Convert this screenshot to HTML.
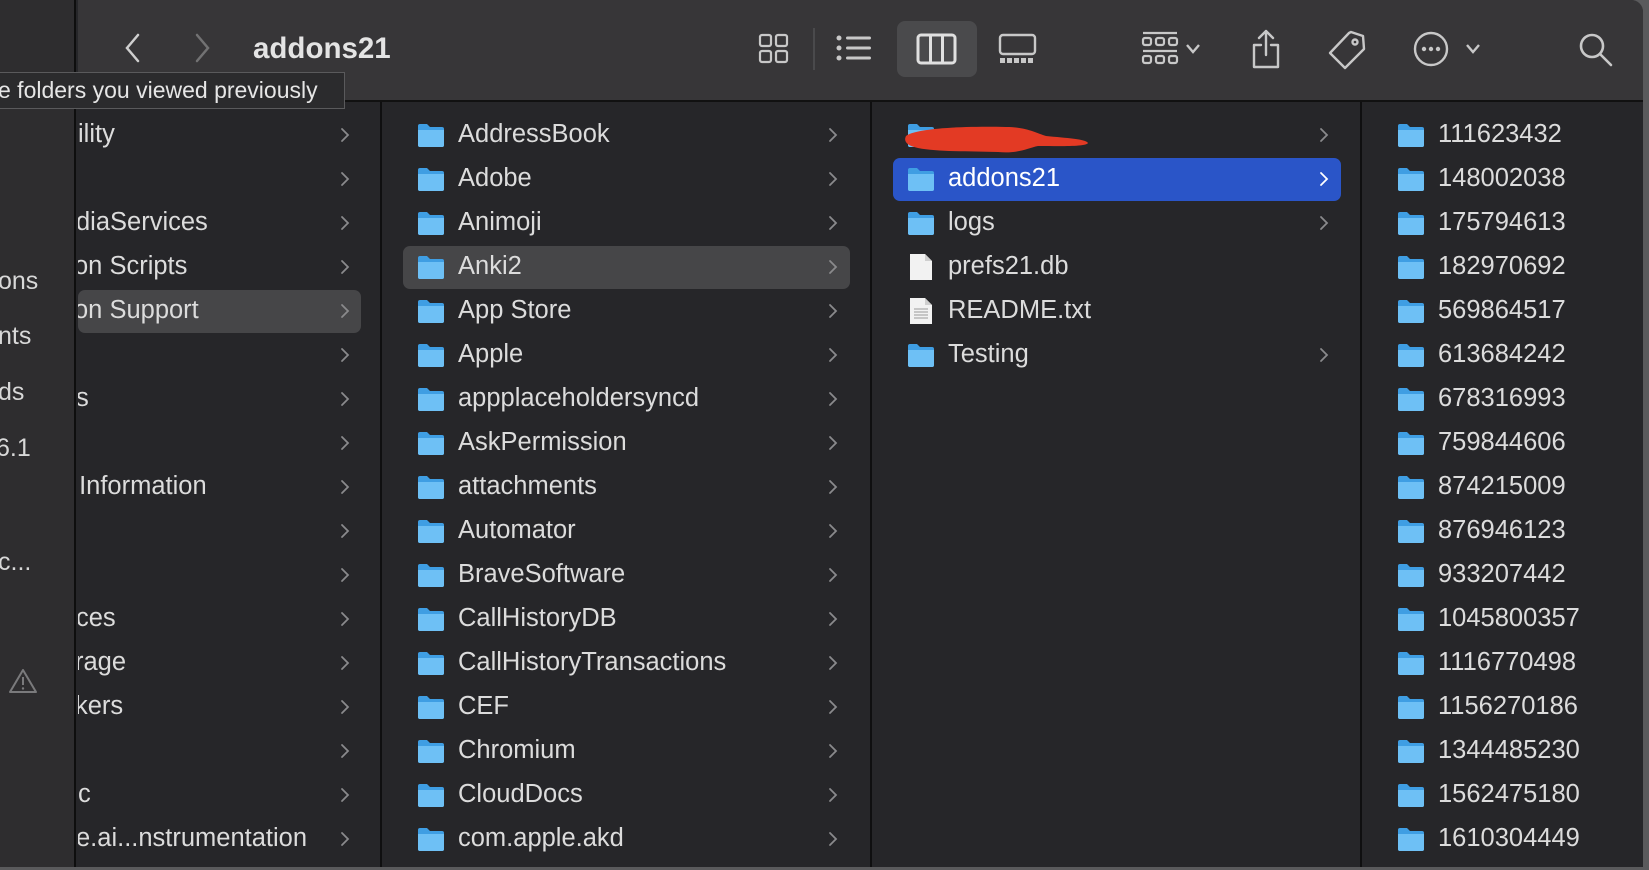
<!DOCTYPE html>
<html><head><meta charset="utf-8"><style>
*{margin:0;padding:0;box-sizing:border-box}
html,body{width:1649px;height:870px;overflow:hidden}
body{background:#5a5a5c;font-family:"Liberation Sans",Helvetica,Arial,sans-serif;position:relative}
.win{position:absolute;left:0;top:0;width:1643px;height:867px;background:#262629;border-top-right-radius:12px;overflow:hidden}
.side{position:absolute;left:0;top:0;width:76px;height:867px;background:#2e2d2f;border-right:2px solid #0e0e0e}
.tb{position:absolute;left:78px;top:0;right:0;height:102px;background:#373638;border-bottom:2px solid #111}
.col{position:absolute;top:102px;height:765px;border-right:2px solid #0f0f10;overflow:hidden}
.row{position:absolute;height:43px;line-height:43px;font-size:25.5px;color:#dcdcdc;white-space:nowrap}
.hl{position:absolute;background:#464648;border-radius:7px}
.sel{position:absolute;background:#2a55c8;border-radius:7px}
.chev{position:absolute;width:12px;height:16px}
.fold{position:absolute;width:28px;height:24px}
.st{position:absolute;font-size:25px;color:#d8d8d8}
svg{display:block}
</style></head><body>
<div class="win">
<div class="side">
 <div class="st" style="left:-2px;top:267px">ons</div>
 <div class="st" style="left:-2px;top:322px">nts</div>
 <div class="st" style="left:-2px;top:378px">ds</div>
 <div class="st" style="left:-4px;top:434px">6.1</div>
 <div class="st" style="left:-2px;top:548px">c...</div>
 <svg style="position:absolute;left:8px;top:668px" width="30" height="26" viewBox="0 0 30 26"><path d="M15 2 L28 24 H2 Z" fill="none" stroke="#7a7a7c" stroke-width="2" stroke-linejoin="round"/><path d="M15 9v8" stroke="#7a7a7c" stroke-width="2"/><circle cx="15" cy="20.5" r="1.2" fill="#7a7a7c"/></svg>
</div>
<div class="tb">
 <svg style="position:absolute;left:45px;top:32px" width="20" height="32"><path d="M15 3 L4 16 L15 29" fill="none" stroke="#cfcfcf" stroke-width="2.5" stroke-linecap="round"/></svg>
 <svg style="position:absolute;left:114px;top:32px" width="20" height="32"><path d="M5 3 L16 16 L5 29" fill="none" stroke="#727273" stroke-width="2.5" stroke-linecap="round"/></svg>
 <div style="position:absolute;left:175px;top:32px;font-size:29.5px;font-weight:bold;color:#e4e4e4">addons21</div>
 <svg style="position:absolute;left:680px;top:33px" width="32" height="32"><g fill="none" stroke="#c8c8c8" stroke-width="2.2"><rect x="2" y="2" width="11" height="11" rx="2"/><rect x="18" y="2" width="11" height="11" rx="2"/><rect x="2" y="18" width="11" height="11" rx="2"/><rect x="18" y="18" width="11" height="11" rx="2"/></g></svg>
 <div style="position:absolute;left:735px;top:28px;width:2px;height:42px;background:#4a4a4c"></div>
 <svg style="position:absolute;left:758px;top:35px" width="36" height="28"><g fill="#c8c8c8"><circle cx="3" cy="3" r="2.5"/><circle cx="3" cy="13" r="2.5"/><circle cx="3" cy="23" r="2.5"/><rect x="10" y="1.5" width="25" height="3" rx="1.5"/><rect x="10" y="11.5" width="25" height="3" rx="1.5"/><rect x="10" y="21.5" width="25" height="3" rx="1.5"/></g></svg>
 <div style="position:absolute;left:819px;top:21px;width:80px;height:56px;background:#4a4a4c;border-radius:8px"></div>
 <svg style="position:absolute;left:838px;top:33px" width="42" height="32"><g fill="none" stroke="#e0e0e0" stroke-width="3"><rect x="2" y="2" width="37" height="28" rx="3"/><path d="M14.5 2v28M26.5 2v28"/></g></svg>
 <svg style="position:absolute;left:920px;top:33px" width="40" height="32"><g fill="none" stroke="#c8c8c8" stroke-width="2.4"><rect x="2" y="2" width="35" height="19" rx="3"/></g><g fill="#c8c8c8"><rect x="2" y="25" width="5" height="5"/><rect x="9" y="25" width="5" height="5"/><rect x="16" y="25" width="5" height="5"/><rect x="23" y="25" width="5" height="5"/><rect x="30" y="25" width="5" height="5"/></g></svg>
 <svg style="position:absolute;left:1063px;top:31px" width="40" height="36"><g fill="none" stroke="#c8c8c8" stroke-width="2.2"><path d="M2 2h34M2 20h34"/><rect x="2" y="7" width="8" height="7" rx="2"/><rect x="15" y="7" width="8" height="7" rx="2"/><rect x="28" y="7" width="8" height="7" rx="2"/><rect x="2" y="25" width="8" height="7" rx="2"/><rect x="15" y="25" width="8" height="7" rx="2"/><rect x="28" y="25" width="8" height="7" rx="2"/></g></svg>
 <svg style="position:absolute;left:1107px;top:43px" width="16" height="12"><path d="M2 2l6 7 6-7" fill="none" stroke="#c8c8c8" stroke-width="2.4"/></svg>
 <svg style="position:absolute;left:1172px;top:28px" width="32" height="42"><g fill="none" stroke="#c8c8c8" stroke-width="2.4" stroke-linecap="round" stroke-linejoin="round"><path d="M16 3v24M9 10l7-7 7 7"/><path d="M11 17H4v22h24V17h-7"/></g></svg>
 <svg style="position:absolute;left:1249px;top:29px" width="40" height="42"><g fill="none" stroke="#c8c8c8" stroke-width="2.4" stroke-linejoin="round"><path d="M24 3l12 4 1 13-19 19-15-15L22 4z"/><circle cx="28" cy="13" r="2.5"/></g></svg>
 <svg style="position:absolute;left:1335px;top:31px" width="36" height="36"><circle cx="18" cy="18" r="16" fill="none" stroke="#c8c8c8" stroke-width="2.4"/><g fill="#c8c8c8"><circle cx="11" cy="18" r="2.2"/><circle cx="18" cy="18" r="2.2"/><circle cx="25" cy="18" r="2.2"/></g></svg>
 <svg style="position:absolute;left:1387px;top:43px" width="16" height="12"><path d="M2 2l6 7 6-7" fill="none" stroke="#c8c8c8" stroke-width="2.4"/></svg>
 <svg style="position:absolute;left:1500px;top:32px" width="36" height="36"><g fill="none" stroke="#c8c8c8" stroke-width="2.6" stroke-linecap="round"><circle cx="14" cy="14" r="11"/><path d="M22 22l11 11"/></g></svg>
</div>

<div class="col" style="left:78px;width:304px">
 <div class="hl" style="left:0;top:188px;width:283px;height:43px"></div>
 <div class="row" style="left:0;top:11px">ility</div>
 <div class="row" style="left:-12px;top:55px">s</div>
 <div class="row" style="left:-2px;top:99px">diaServices</div>
 <div class="row" style="left:-4px;top:143px">on Scripts</div>
 <div class="row" style="left:-4px;top:187px">on Support</div>
 <div class="row" style="left:-2px;top:275px">s</div>
 <div class="row" style="left:-6px;top:363px">&nbsp;Information</div>
 <div class="row" style="left:-2px;top:495px">ces</div>
 <div class="row" style="left:-3px;top:539px">rage</div>
 <div class="row" style="left:-3px;top:583px">kers</div>
 <div class="row" style="left:0;top:671px">c</div>
 <div class="row" style="left:-2px;top:715px">e.ai...nstrumentation</div>
</div>
<div class="col" style="left:382px;width:490px">
 <div class="hl" style="left:21px;top:144px;width:447px;height:43px"></div>
</div>
<div class="col" style="left:872px;width:490px">
 <div class="sel" style="left:21px;top:56px;width:448px;height:43px"></div>
</div>
<div id="rows"></div>

<div style="position:absolute;left:-2px;top:72px;width:347px;height:37px;background:#2b2b2d;border:1px solid #5a5a5c;border-left:none;font-size:23px;color:#e6e6e6;line-height:35px;white-space:nowrap;overflow:hidden">e folders you viewed previously</div>
</div>
<script>
var F='<svg class="fold" viewBox="0 0 28 24"><path d="M1 3a2 2 0 0 1 2-2h7l3 3h12a2 2 0 0 1 2 2v16a2 2 0 0 1-2 2H3a2 2 0 0 1-2-2z" fill="#3f9ee3"/><path d="M1 7h26v15a2 2 0 0 1-2 2H3a2 2 0 0 1-2-2z" fill="#6ec0f5"/></svg>';
var C=function(c){return '<svg viewBox="0 0 12 16" width="12" height="16"><path d="M3 2l6 6-6 6" fill="none" stroke="'+c+'" stroke-width="1.8" stroke-linecap="round"/></svg>'};
var h='';
function chev(x,i,c){h+='<div class="chev" style="left:'+x+'px;top:'+(127+44*i)+'px">'+C(c||'#8a8a8c')+'</div>';}
for(var i=0;i<17;i++)chev(339,i);
var c2=["AddressBook","Adobe","Animoji","Anki2","App Store","Apple","appplaceholdersyncd","AskPermission","attachments","Automator","BraveSoftware","CallHistoryDB","CallHistoryTransactions","CEF","Chromium","CloudDocs","com.apple.akd"];
c2.forEach(function(t,i){var y=113+44*i;h+='<div class="fold" style="left:417px;top:'+(y+10)+'px">'+F+'</div><div class="row" style="left:458px;top:'+y+'px">'+t+'</div>';chev(827,i);});
var c3=[["",1],["addons21",1],["logs",1],["prefs21.db",0],["README.txt",0],["Testing",1]];
c3.forEach(function(t,i){var y=113+44*i;
 if(t[1])h+='<div class="fold" style="left:907px;top:'+(y+10)+'px">'+F+'</div>';
 else h+='<svg style="position:absolute;left:909px;top:'+(y+8)+'px" width="24" height="28"><path d="M1 1h15l7 7v19H1z" fill="#f2f2f2"/><path d="M16 1v7h7" fill="#cfcfcf"/>'+(i==4?'<g stroke="#999" stroke-width="1"><path d="M5 12h14M5 15h14M5 18h14M5 21h14"/></g>':'')+'</svg>';
 h+='<div class="row" style="left:948px;top:'+y+'px;color:'+(i==1?'#fff':'#dcdcdc')+'">'+t[0]+'</div>';
 if(t[1])chev(1318,i,i==1?'#fff':'#8a8a8c');});
h+='<svg style="position:absolute;left:900px;top:118px" width="200" height="36"><path d="M6 18c10-8 60-10 100-9 20 0 30 6 40 9 20 2 40 3 42 7-2 4-30 3-50 3-10 2-20 8-40 6-30-1-60 0-80-4-10-2-15-6-12-12z" fill="#e33a24"/></svg>';
var c4=["111623432","148002038","175794613","182970692","569864517","613684242","678316993","759844606","874215009","876946123","933207442","1045800357","1116770498","1156270186","1344485230","1562475180","1610304449"];
c4.forEach(function(t,i){var y=113+44*i;h+='<div class="fold" style="left:1397px;top:'+(y+10)+'px">'+F+'</div><div class="row" style="left:1438px;top:'+y+'px">'+t+'</div>';});
document.getElementById('rows').outerHTML=h;
</script>
</body></html>
